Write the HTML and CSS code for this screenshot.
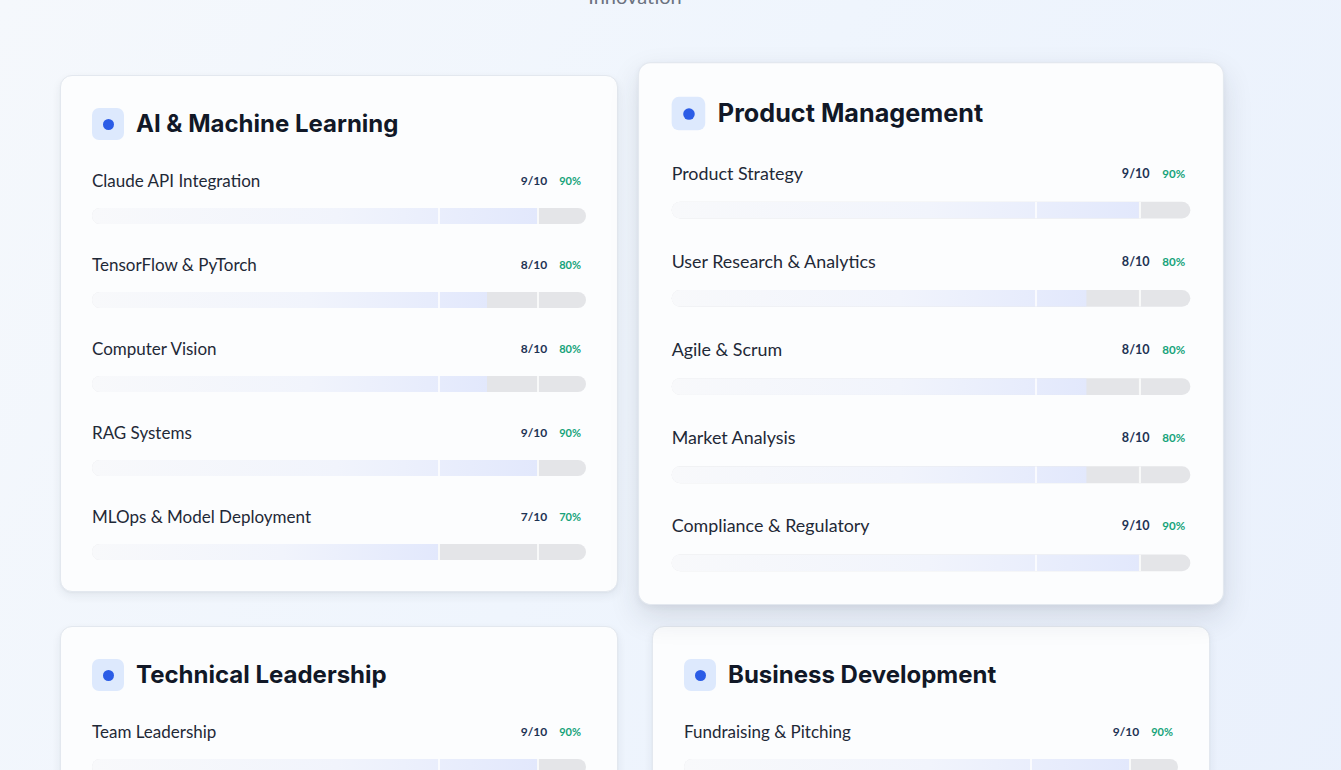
FILE: index.html
```html
<!DOCTYPE html>
<html lang="en">
<head>
<meta charset="utf-8">
<title>Skills</title>
<link rel="stylesheet" href="styles.css">
</head>
<body>
<div class="page">
  <header class="intro">
    <p class="intro-sub">Innovation</p>
  </header>
  <main class="grid">
    <section class="card">
      <div class="card-head"><span class="dot-box"><span class="dot"></span></span><h2>AI &amp; Machine Learning</h2></div>
      <div class="skills">
        <div class="skill"><div class="skill-row"><span class="name">Claude API Integration</span><span class="meta"><span class="score">9/10</span><span class="pct">90%</span></span></div><div class="track"><div class="fill" style="width:90%"></div></div></div>
        <div class="skill"><div class="skill-row"><span class="name">TensorFlow &amp; PyTorch</span><span class="meta"><span class="score">8/10</span><span class="pct">80%</span></span></div><div class="track"><div class="fill" style="width:80%"></div></div></div>
        <div class="skill"><div class="skill-row"><span class="name">Computer Vision</span><span class="meta"><span class="score">8/10</span><span class="pct">80%</span></span></div><div class="track"><div class="fill" style="width:80%"></div></div></div>
        <div class="skill"><div class="skill-row"><span class="name">RAG Systems</span><span class="meta"><span class="score">9/10</span><span class="pct">90%</span></span></div><div class="track"><div class="fill" style="width:90%"></div></div></div>
        <div class="skill"><div class="skill-row"><span class="name">MLOps &amp; Model Deployment</span><span class="meta"><span class="score">7/10</span><span class="pct">70%</span></span></div><div class="track"><div class="fill" style="width:70%"></div></div></div>
      </div>
    </section>
    <section class="card card-active">
      <div class="card-head"><span class="dot-box"><span class="dot"></span></span><h2>Product Management</h2></div>
      <div class="skills">
        <div class="skill"><div class="skill-row"><span class="name">Product Strategy</span><span class="meta"><span class="score">9/10</span><span class="pct">90%</span></span></div><div class="track"><div class="fill" style="width:90%"></div></div></div>
        <div class="skill"><div class="skill-row"><span class="name">User Research &amp; Analytics</span><span class="meta"><span class="score">8/10</span><span class="pct">80%</span></span></div><div class="track"><div class="fill" style="width:80%"></div></div></div>
        <div class="skill"><div class="skill-row"><span class="name">Agile &amp; Scrum</span><span class="meta"><span class="score">8/10</span><span class="pct">80%</span></span></div><div class="track"><div class="fill" style="width:80%"></div></div></div>
        <div class="skill"><div class="skill-row"><span class="name">Market Analysis</span><span class="meta"><span class="score">8/10</span><span class="pct">80%</span></span></div><div class="track"><div class="fill" style="width:80%"></div></div></div>
        <div class="skill"><div class="skill-row"><span class="name">Compliance &amp; Regulatory</span><span class="meta"><span class="score">9/10</span><span class="pct">90%</span></span></div><div class="track"><div class="fill" style="width:90%"></div></div></div>
      </div>
    </section>
    <section class="card">
      <div class="card-head"><span class="dot-box"><span class="dot"></span></span><h2>Technical Leadership</h2></div>
      <div class="skills">
        <div class="skill"><div class="skill-row"><span class="name">Team Leadership</span><span class="meta"><span class="score">9/10</span><span class="pct">90%</span></span></div><div class="track"><div class="fill" style="width:90%"></div></div></div>
        <div class="skill"><div class="skill-row"><span class="name">System Architecture</span><span class="meta"><span class="score">9/10</span><span class="pct">90%</span></span></div><div class="track"><div class="fill" style="width:90%"></div></div></div>
        <div class="skill"><div class="skill-row"><span class="name">Code Review &amp; Mentoring</span><span class="meta"><span class="score">8/10</span><span class="pct">80%</span></span></div><div class="track"><div class="fill" style="width:80%"></div></div></div>
      </div>
    </section>
    <section class="card">
      <div class="card-head"><span class="dot-box"><span class="dot"></span></span><h2>Business Development</h2></div>
      <div class="skills">
        <div class="skill"><div class="skill-row"><span class="name">Fundraising &amp; Pitching</span><span class="meta"><span class="score">9/10</span><span class="pct">90%</span></span></div><div class="track"><div class="fill" style="width:90%"></div></div></div>
        <div class="skill"><div class="skill-row"><span class="name">Partnerships</span><span class="meta"><span class="score">8/10</span><span class="pct">80%</span></span></div><div class="track"><div class="fill" style="width:80%"></div></div></div>
        <div class="skill"><div class="skill-row"><span class="name">Go-to-Market Strategy</span><span class="meta"><span class="score">8/10</span><span class="pct">80%</span></span></div><div class="track"><div class="fill" style="width:80%"></div></div></div>
      </div>
    </section>
  </main>
</div>
</body>
</html>
```

FILE: styles.css
```css
* { box-sizing: border-box; }

html, body { margin: 0; padding: 0; }

body {
  min-height: 100vh;
  background: linear-gradient(120deg, #f5f8fc 0%, #eff5fd 45%, #e9f0fc 100%);
  font-family: Lato, "Liberation Sans", sans-serif;
  color: #1f2937;
  overflow: hidden;
}

.page {
  width: 1150px;
  margin-left: 60px;
}

.intro {
  display: flow-root;
  text-align: center;
  height: 75px;
}

.intro-sub {
  margin: -18px 0 0;
  font-size: 20px;
  line-height: 28px;
  color: #6b7280;
}

.grid {
  display: grid;
  grid-template-columns: 1fr 1fr;
  column-gap: 34px;
  row-gap: 34px;
  align-items: start;
}

.card {
  background: #fcfdfe;
  border: 1px solid #e3e8ef;
  border-radius: 12px;
  padding: 32px 31px 31px;
  box-shadow: 0 4px 10px rgba(30, 41, 59, 0.07), 0 1px 2px rgba(30, 41, 59, 0.04);
}

.card-active {
  transform: scale(1.05);
  box-shadow: 0 12px 28px rgba(30, 41, 59, 0.12), 0 2px 6px rgba(30, 41, 59, 0.05);
  position: relative;
  z-index: 1;
}

.card-head {
  display: flex;
  align-items: center;
  gap: 12px;
  margin-bottom: 28px;
}

.dot-box {
  width: 32px;
  height: 32px;
  border-radius: 7px;
  background: #dde9fd;
  display: flex;
  align-items: center;
  justify-content: center;
  flex: none;
}

.dot {
  width: 11px;
  height: 11px;
  border-radius: 50%;
  background: #2b5ce6;
}

.card-head h2 {
  margin: 0;
  font-family: Inter, "Liberation Sans", sans-serif;
  font-size: 24px;
  font-weight: 700;
  line-height: 32px;
  color: #111827;
}

.skills {
  display: flex;
  flex-direction: column;
  gap: 28px;
}

.skill-row {
  display: flex;
  align-items: center;
  justify-content: space-between;
  height: 24px;
  margin-bottom: 16px;
}

.name {
  font-size: 17px;
  color: #1f2937;
}

.meta {
  display: flex;
  align-items: center;
  gap: 7px;
}

.score {
  font-size: 12px;
  font-weight: 700;
  color: #1e3354;
}

.pct {
  font-size: 11px;
  font-weight: 700;
  color: #16a37a;
  padding: 0 5px;
}

.track {
  position: relative;
  height: 16px;
  border-radius: 8px;
  background: #e4e5e8;
  overflow: hidden;
}

.fill {
  height: 100%;
  background: linear-gradient(90deg, #f8f9fb 0%, #f1f4fc 55%, #e2e8fc 100%);
}

.track::before,
.track::after {
  content: "";
  position: absolute;
  top: 0;
  bottom: 0;
  width: 2px;
  background: rgba(255, 255, 255, 0.75);
}

.track::before { left: 70%; }
.track::after { left: 90%; }
```
